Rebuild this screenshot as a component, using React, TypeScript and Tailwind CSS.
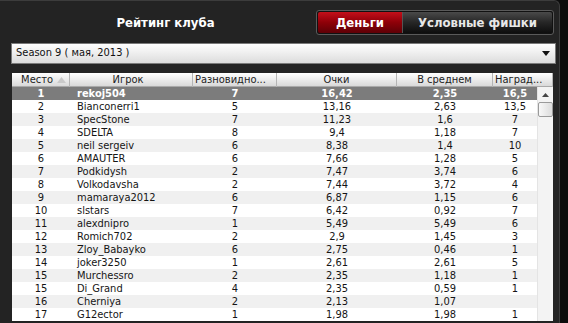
const rows: [string, string, string, string, string, string][] = [
  ['1', 'rekoj504', '7', '16,42', '2,35', '16,5'],
  ['2', 'Bianconerri1', '5', '13,16', '2,63', '13,5'],
  ['3', 'SpecStone', '7', '11,23', '1,6', '7'],
  ['4', 'SDELTA', '8', '9,4', '1,18', '7'],
  ['5', 'neil sergeiv', '6', '8,38', '1,4', '10'],
  ['6', 'AMAUTER', '6', '7,66', '1,28', '5'],
  ['7', 'Podkidysh', '2', '7,47', '3,74', '6'],
  ['8', 'Volkodavsha', '2', '7,44', '3,72', '4'],
  ['9', 'mamaraya2012', '6', '6,87', '1,15', '6'],
  ['10', 'slstars', '7', '6,42', '0,92', '7'],
  ['11', 'alexdnipro', '1', '5,49', '5,49', '6'],
  ['12', 'Romich702', '2', '2,9', '1,45', '3'],
  ['13', 'Zloy_Babayko', '6', '2,75', '0,46', '1'],
  ['14', 'joker3250', '1', '2,61', '2,61', '5'],
  ['15', 'Murchessro', '2', '2,35', '1,18', '1'],
  ['15', 'Di_Grand', '4', '2,35', '0,59', '1'],
  ['16', 'Cherniya', '2', '2,13', '1,07', ''],
  ['17', 'G12ector', '1', '1,98', '1,98', '1'],
];

const font = { fontFamily: '"DejaVu Sans Condensed", "Liberation Sans", sans-serif' };

export default function App() {
  return (
    <div className="w-[568px] h-[323px] bg-[#0c0c0c] overflow-hidden" style={font}>
      <div className="w-[560px] h-[330px] bg-[#232323] rounded-tr-md border-t border-r border-[#3c3c3c] pl-[11px] pr-[3px]">
        {/* top bar */}
        <div className="flex items-center h-[42px] pt-[1px]">
          <div className="flex-1 text-center text-white font-bold text-[13px] pl-[4px]">Рейтинг клуба</div>
          <div className="flex mr-[2px] rounded-[3px] border border-[#5a5a5a] p-px bg-[#111]">
            <div className="w-[85px] h-[21px] flex items-center justify-center text-white font-bold text-[13px] rounded-l-[2px] bg-gradient-to-b from-[#c4101a] via-[#8e0008] to-[#5e0006] border-r border-[#555]">
              Деньги
            </div>
            <div className="w-[149px] h-[21px] flex items-center justify-center text-[#e8e8e8] font-bold text-[13px] rounded-r-[2px] bg-gradient-to-b from-[#4a4a4a] via-[#262626] to-[#0e0e0e]">
              Условные фишки
            </div>
          </div>
        </div>

        {/* season select */}
        <div className="h-[21px] flex items-center justify-between border border-[#7a7a7a] bg-gradient-to-b from-[#ffffff] to-[#dcdcdc] pl-[4px] pr-[5px] text-[11px] text-[#111]">
          <span>Season 9 ( мая, 2013 )</span>
          <svg width="8" height="5" viewBox="0 0 8 5">
            <path d="M0 0 L8 0 L4 5 Z" fill="#111" />
          </svg>
        </div>

        {/* table */}
        <div className="mt-[9px] ml-px w-[541px] bg-white text-[11px] text-[#151515]">
          <div className="grid grid-cols-[58px_123px_84px_120px_96px_60px] h-[14px] leading-[14px] bg-gradient-to-b from-[#ffffff] to-[#d9d9d9] border-b border-[#a9a9a9] text-[#222]">
            <div className="flex items-center justify-end pr-[3px] gap-[4px] border-r border-[#b5b5b5]">
              <span>Место</span>
              <svg width="9" height="6" viewBox="0 0 9 6">
                <path d="M0 6 L4.5 0 L9 6 Z" fill="#c9c9c9" />
              </svg>
            </div>
            <div className="text-center border-r border-[#b5b5b5] pr-[6px]">Игрок</div>
            <div className="pl-[2px] border-r border-[#b5b5b5] whitespace-nowrap overflow-hidden">Разновидно...</div>
            <div className="text-center border-r border-[#b5b5b5]">Очки</div>
            <div className="text-center border-r border-[#b5b5b5]">В среднем</div>
            <div className="pl-[2px] border-r border-[#b5b5b5]">Наград...</div>
          </div>
          <div className="flex">
            <div className="w-[525px]">
              {rows.map((r, i) => (
                <div
                  key={i}
                  className={
                    'grid grid-cols-[58px_123px_84px_120px_96px_44px] h-[13px] leading-[13px] ' +
                    (i === 0 ? 'bg-[#7c7c7c] text-white font-bold' : i % 2 === 0 ? 'bg-[#f0f0f0]' : 'bg-white')
                  }
                >
                  <div className="text-center">{r[0]}</div>
                  <div className="pl-[7px]">{r[1]}</div>
                  <div className="text-center">{r[2]}</div>
                  <div className="text-center">{r[3]}</div>
                  <div className="text-center">{r[4]}</div>
                  <div className="text-center">{r[5]}</div>
                </div>
              ))}
            </div>
            {/* scrollbar */}
            <div className="w-[16px] bg-[#f3f3f3] border-l border-[#e4e4e4] flex flex-col items-center">
              <svg className="mt-[6px]" width="7" height="4" viewBox="0 0 7 4">
                <path d="M0 4 L3.5 0 L7 4 Z" fill="#444" />
              </svg>
              <div className="mt-[5px] w-[15px] h-[15px] rounded-[2px] border border-[#9a9a9a] bg-gradient-to-r from-[#f8f8f8] to-[#dcdcdc]" />
            </div>
          </div>
        </div>
      </div>
    </div>
  );
}
